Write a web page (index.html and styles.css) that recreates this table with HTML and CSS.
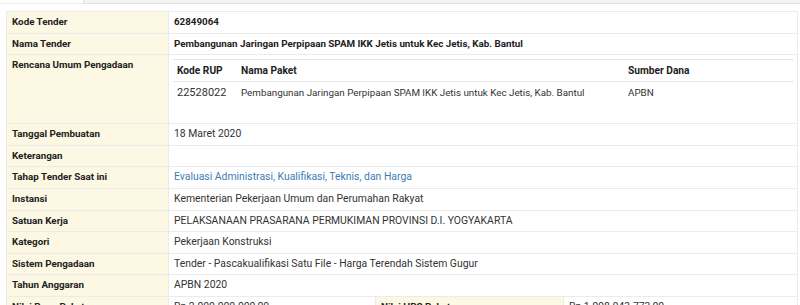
FILE: index.html
```html
<!DOCTYPE html>
<html lang="id">
<head>
<meta charset="utf-8">
<title>Detail Tender</title>
<link rel="stylesheet" href="styles.css">
</head>
<body>
<div class="tabs">
  <div class="tab-active"></div>
  <div class="tab-rest"></div>
</div>
<table class="detail">
  <colgroup>
    <col class="c1"><col class="c2"><col class="c3"><col class="c4">
  </colgroup>
  <tr><th>Kode Tender</th><td colspan="3" class="strong">62849064</td></tr>
  <tr><th>Nama Tender</th><td colspan="3" class="strong">Pembangunan Jaringan Perpipaan SPAM IKK Jetis untuk Kec Jetis, Kab. Bantul</td></tr>
  <tr><th>Rencana Umum Pengadaan</th><td colspan="3" class="nested-cell">
    <table class="rup">
      <colgroup><col class="r1"><col class="r2"><col class="r3"></colgroup>
      <tr><th>Kode RUP</th><th>Nama Paket</th><th>Sumber Dana</th></tr>
      <tr><td class="code">22528022</td><td>Pembangunan Jaringan Perpipaan SPAM IKK Jetis untuk Kec Jetis, Kab. Bantul</td><td>APBN</td></tr>
    </table>
  </td></tr>
  <tr><th>Tanggal Pembuatan</th><td colspan="3">18 Maret 2020</td></tr>
  <tr><th>Keterangan</th><td colspan="3"></td></tr>
  <tr><th>Tahap Tender Saat ini</th><td colspan="3"><a class="link" href="#">Evaluasi Administrasi, Kualifikasi, Teknis, dan Harga</a></td></tr>
  <tr><th>Instansi</th><td colspan="3">Kementerian Pekerjaan Umum dan Perumahan Rakyat</td></tr>
  <tr><th>Satuan Kerja</th><td colspan="3">PELAKSANAAN PRASARANA PERMUKIMAN PROVINSI D.I. YOGYAKARTA</td></tr>
  <tr><th>Kategori</th><td colspan="3">Pekerjaan Konstruksi</td></tr>
  <tr><th>Sistem Pengadaan</th><td colspan="3">Tender - Pascakualifikasi Satu File - Harga Terendah Sistem Gugur</td></tr>
  <tr><th>Tahun Anggaran</th><td colspan="3">APBN 2020</td></tr>
  <tr><th>Nilai Pagu Paket</th><td>Rp 2.000.000.000,00</td><th>Nilai HPS Paket</th><td>Rp 1.998.943.773,00</td></tr>
</table>
</body>
</html>
```
FILE: styles.css
```css
html, body {
  margin: 0;
  padding: 0;
  background: #fff;
}
body {
  font-family: Roboto, "Liberation Sans", sans-serif;
  font-size: 10.4px;
  color: #333;
  overflow: hidden;
}
.tabs {
  display: flex;
  height: 4px;
}
.tab-active {
  width: 83px;
  border-bottom: 1px solid #eee;
}
.tab-rest {
  flex: 1;
  background: #f4f4f4;
  border: 1px solid #e2e2e2;
  border-top: none;
  border-right: none;
}
.detail {
  margin: 7px 0 0 6px;
  width: 791px;
  border-collapse: collapse;
  table-layout: fixed;
}
.c1 { width: 162px; }
.c2 { width: 207px; }
.c3 { width: 188px; }
.c4 { width: 234px; }
.detail > tbody > tr > th,
.detail > tbody > tr > td {
  border: 1px solid #ebebeb;
  padding: 4px 4px 4px 5px;
  line-height: 12.6px;
  height: 12.6px;
  vertical-align: top;
  text-align: left;
  white-space: nowrap;
  overflow: hidden;
}
.detail > tbody > tr > th {
  background: #fcf8e3;
  font-weight: 700;
  font-size: 9.8px;
  color: #222;
}
.detail > tbody > tr > td.strong {
  font-weight: 700;
  font-size: 9.8px;
  color: #222;
}
.detail > tbody > tr > td.nested-cell {
  padding: 4px 4px 4px 4px;
}
.link {
  color: #3b7cb5;
  text-decoration: none;
}
.rup {
  width: 621px;
  border-collapse: collapse;
  table-layout: fixed;
  margin-bottom: 16px;
  font-size: 10.2px;
}
.r1 { width: 64px; }
.r2 { width: 387px; }
.r3 { width: 170px; }
.rup th, .rup td {
  text-align: left;
  padding: 5px 4px 4px 4px;
  line-height: 12px;
  border-top: 1px solid #e8e8e8;
  white-space: nowrap;
  overflow: hidden;
}
.rup th {
  font-weight: 700;
  color: #222;
}
.rup td {
  font-size: 9.8px;
}
.rup td.code {
  font-size: 11px;
}
```
